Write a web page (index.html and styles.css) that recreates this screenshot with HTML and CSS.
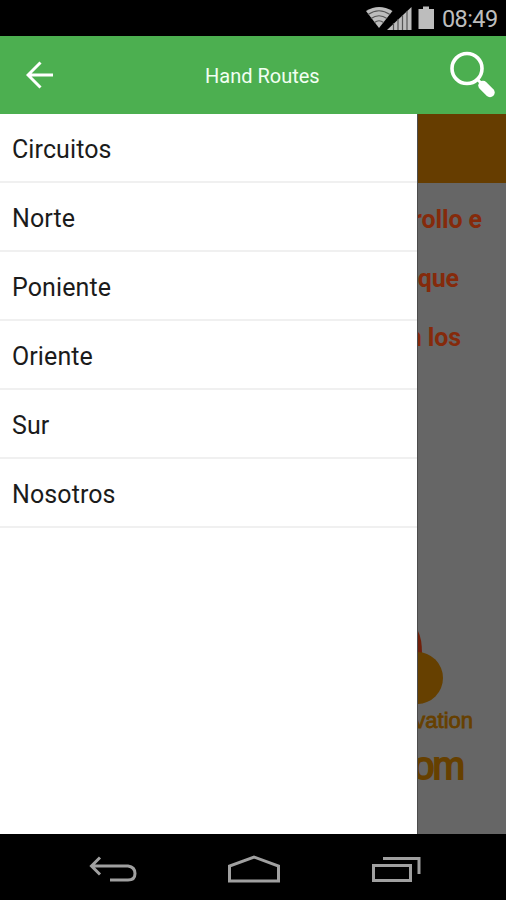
FILE: index.html
```html
<!DOCTYPE html>
<html lang="es">
<head>
<meta charset="utf-8">
<title>Hand Routes</title>
<link rel="stylesheet" href="styles.css">
</head>
<body>
<div class="screen">
  <div class="status">
    <svg class="status-icons" width="70" height="24" viewBox="0 0 70 24">
      <path class="soft" d="M1 5Q14 -3 27.500 5L14 22Z"/>
      <path class="arc" d="M3 8.500Q14 1 25 8.500M6 12.500Q14 7 22 12.500M9.500 16.500Q14 13 18.500 16.500"/>
      <path class="soft" d="M22 24L46.500 1V24Z"/>
      <path class="arc" d="M28.500 17V24M33 13V24M37.500 9V24M42 5V24"/>
      <path class="soft" d="M53.500 3h4.500V0.500h6v2.500H69v20H53.500Z"/>
    </svg>
    <span class="clock">08:49</span>
  </div>
  <header class="bar">
    <svg class="back" width="28" height="28" viewBox="0 0 28 28"><path d="M27 14H2M14.500 1.500L2 14L14.500 26.500"/></svg>
    <h1 class="title">Hand Routes</h1>
    <svg class="search" width="48" height="48" viewBox="0 0 48 48"><circle cx="18" cy="17.500" r="15"/><path class="neck" d="M28 28L33 33"/><path class="grip" d="M34 34.500L41 41.500"/></svg>
  </header>
  <main class="content">
    <nav class="drawer">
      <a class="item">Circuitos</a>
      <a class="item">Norte</a>
      <a class="item">Poniente</a>
      <a class="item">Oriente</a>
      <a class="item">Sur</a>
      <a class="item">Nosotros</a>
    </nav>
    <section class="page">
      <div class="band"></div>
      <div class="copy">
        <p class="line l1">rollo e</p>
        <p class="line l2">que</p>
        <p class="line l3">n los</p>
      </div>
      <div class="brand">
        <svg class="mark" width="28" height="76" viewBox="0 0 28 76"><path class="red" d="M0 2Q4 10 4 24H0Z"/><circle cx="-1" cy="49" r="26"/></svg>
        <p class="word">vation</p>
        <p class="domain">om</p>
      </div>
    </section>
  </main>
  <footer class="nav">
    <svg width="48" height="28" viewBox="0 0 48 28"><path d="M2 11H39Q46 12 46 18.500T39 25H21M11 2.500L2.500 11L11 19.500"/></svg>
    <svg class="home" width="54" height="30" viewBox="0 0 54 30"><path d="M2.500 27V12L27 3L51.500 12V27Z"/></svg>
    <svg class="recent" width="50" height="28" viewBox="0 0 50 28"><path d="M2.500 10.500H39.500V25.500H2.500ZM12 3.500H48V19"/></svg>
  </footer>
</div>
</body>
</html>
```

FILE: styles.css
```css
* { box-sizing: border-box; }
body { margin: 0; font-family: Roboto, "Liberation Sans", sans-serif; }
p, h1 { margin: 0; }
svg { display: block; flex: none; }
.screen { width: 506px; height: 900px; display: flex; flex-direction: column; overflow: hidden; background: #000; }

.status { height: 36px; flex: none; display: flex; justify-content: flex-end; align-items: center; gap: 7px; padding: 0 8px 0 0; }
.status-icons .soft { fill: #bdbdbd; }
.status-icons .arc { fill: none; stroke: #555; stroke-width: 1.2; }
.clock { color: #bdbdbd; font-size: 23.5px; line-height: 36px; width: 56px; white-space: nowrap; padding-top: 1px; letter-spacing: -0.6px; }

.bar { height: 78px; flex: none; background: #4caf50; display: flex; align-items: center; padding: 0 9px 0 26px; }
.back path { fill: none; stroke: #fff; stroke-width: 3; }
.title { flex: 1; padding-left: 151px; color: #f2fff2; font-size: 20px; font-weight: 400; line-height: 24px; padding-top: 2px; white-space: nowrap; }
.search { fill: none; stroke: #fff; }
.search circle { stroke-width: 3.6; }
.search .neck { stroke-width: 3; }
.search .grip { stroke-width: 9.5; stroke-linecap: round; }

.content { height: 720px; flex: none; display: flex; }
.drawer { width: 417px; flex: none; background: #fff; }
.item { display: block; height: 69px; padding: 2px 0 0 12px; border-bottom: 2px solid #f0f0f0; color: #1b1b1b; font-size: 25px; line-height: 68px; letter-spacing: 0.1px; }

.page { flex: 1; background: #666; border-left: 1px solid #4c4c4c; display: flex; flex-direction: column; overflow: hidden; font-weight: 700; }
.band { height: 69px; background: #663d00; }
.copy { padding-top: 7px; }
.line { height: 59px; line-height: 60px; display: flex; justify-content: flex-end; color: #852a0b; font-size: 25px; letter-spacing: -0.1px; white-space: nowrap; }
.l1 { padding-right: 24px; }
.l2 { padding-right: 47px; }
.l3 { padding-right: 45px; }
.brand { margin-top: 262px; font-family: "Liberation Sans", sans-serif; color: #664000; white-space: nowrap; }
.mark { fill: #664000; }
.mark .red { fill: #71200a; }
.word { display: flex; justify-content: flex-end; padding-right: 33px; font-size: 22px; line-height: 32px; font-weight: 400; -webkit-text-stroke: 0.8px #664000; }
.domain { display: flex; justify-content: flex-end; padding-right: 43px; font-size: 39px; line-height: 58px; letter-spacing: -2px; font-weight: 400; -webkit-text-stroke: 1.8px #664000; }

.nav { height: 66px; flex: none; display: flex; align-items: center; padding: 3px 85px 0 89px; justify-content: space-between; }
.nav path { fill: none; stroke: #a0a0a0; stroke-width: 3; }
```
